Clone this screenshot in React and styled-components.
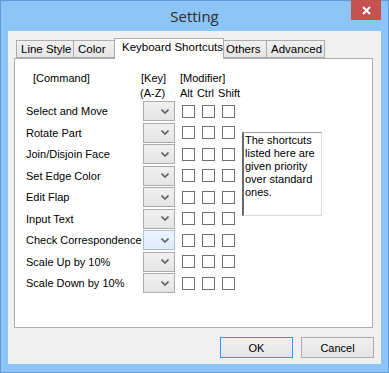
import styled, { createGlobalStyle } from 'styled-components';

const GlobalStyle = createGlobalStyle`
  html, body {
    margin: 0;
    padding: 0;
    background: #8bc4f5;
  }
  * {
    box-sizing: border-box;
  }
`;

const Window = styled.div`
  width: 389px;
  height: 373px;
  background: #8cc4f6;
  border: 1px solid #5d9ad6;
  display: flex;
  flex-direction: column;
  font-family: 'Liberation Sans', Arial, sans-serif;
`;

const TitleBar = styled.div`
  height: 30px;
  display: grid;
  grid-template-columns: 1fr auto 1fr;
  align-items: start;
`;

const Title = styled.div`
  grid-column: 2;
  margin-top: 5px;
  font-family: 'Open Sans', 'Liberation Sans', sans-serif;
  font-size: 15px;
  color: #2d2d2d;
`;

const CloseButton = styled.div`
  grid-column: 3;
  justify-self: end;
  margin-right: 7px;
  margin-top: -1px;
  width: 30px;
  height: 20px;
  background: #c75050;
  display: flex;
  align-items: center;
  justify-content: center;
`;

const Client = styled.div`
  flex: 1;
  margin: 0 7px 8px 7px;
  background: #f0f0f0;
  display: flex;
  flex-direction: column;
`;

const TabStrip = styled.div`
  display: flex;
  align-items: flex-end;
  padding-left: 8px;
  margin-top: 7px;
  height: 20px;
  position: relative;
  z-index: 1;
`;

const Tab = styled.div`
  width: ${(p) => p.$w}px;
  height: ${(p) => (p.$active ? 21 : 18)}px;
  margin-left: ${(p) => (p.$active ? -2 : p.$first ? 0 : -1)}px;
  margin-right: ${(p) => (p.$active ? -2 : 0)}px;
  margin-bottom: ${(p) => (p.$active ? -1 : 0)}px;
  position: relative;
  z-index: ${(p) => (p.$active ? 2 : 1)};
  border: 1px solid #acacac;
  border-bottom: ${(p) => (p.$active ? 'none' : '1px solid #acacac')};
  background: ${(p) =>
    p.$active ? '#ffffff' : 'linear-gradient(#f0f0f0, #e5e5e5)'};
  font-family: 'Liberation Sans', Arial, sans-serif;
  font-size: 11.5px;
  color: #000;
  padding-left: ${(p) => (p.$active ? 7 : 4)}px;
  line-height: ${(p) => (p.$active ? 17 : 16)}px;
  white-space: nowrap;
`;

const Panel = styled.div`
  margin: 0 8px 0 6px;
  height: 270px;
  background: #fff;
  border: 1px solid #acacac;
  padding: 12px 0 0 11px;
  font-size: 11px;
  color: #000;
`;

const Columns = styled.div`
  display: grid;
  grid-template-columns: 110px 32px 13px 13px 13px 80px;
  column-gap: 7px;
`;

const Header = styled(Columns)`
  grid-auto-rows: 15px;
  line-height: 15px;
`;

const HeadCell = styled.div`
  grid-column: ${(p) => p.$col};
  margin-left: ${(p) => p.$shift || 0}px;
  white-space: nowrap;
  word-spacing: 1px;
`;

const Rows = styled(Columns)`
  grid-auto-rows: 20px;
  row-gap: 1.5px;
  align-items: center;
`;

const Label = styled.div`
  grid-column: 1;
  white-space: nowrap;
`;

const Combo = styled.div`
  grid-column: 2;
  height: 20px;
  border: 1px solid ${(p) => (p.$hot ? '#a9bfd6' : '#acacac')};
  background: ${(p) =>
    p.$hot ? 'linear-gradient(#ecf4fc, #dcecfc)' : 'linear-gradient(#f0f0f0, #e5e5e5)'};
  display: flex;
  align-items: center;
  justify-content: flex-end;
  padding-right: 5px;
`;

const Check = styled.div`
  width: 13px;
  height: 13px;
  border: 1px solid #707070;
  background: #fff;
`;

const Note = styled.div`
  grid-column: 6;
  grid-row: 2 / 7;
  align-self: start;
  margin-top: 9px;
  width: 80px;
  height: 84px;
  border-top: 1px solid #a0a0a0;
  border-left: 2px solid #6a6a6a;
  border-right: 1px solid #dadada;
  border-bottom: 1px solid #dadada;
  padding: 1px 0 0 1px;
  font-size: 11px;
  line-height: 13px;
  color: #000;
`;

const ButtonRow = styled.div`
  display: flex;
  justify-content: flex-end;
  gap: 8px;
  margin-top: 9px;
  padding-right: 7px;
`;

const Button = styled.button`
  width: 73px;
  height: 21px;
  border: 1px solid ${(p) => (p.$primary ? '#3399ff' : '#acacac')};
  background: linear-gradient(#f0f0f0, #e5e5e5);
  font-family: 'Liberation Sans', Arial, sans-serif;
  font-size: 11px;
  color: #000;
  padding: 0;
`;

const tabs = [
  { label: 'Line Style', w: 58 },
  { label: 'Color', w: 43 },
  { label: 'Keyboard Shortcuts', w: 110, active: true },
  { label: 'Others', w: 46 },
  { label: 'Advanced', w: 59 },
];

const commands = [
  'Select and Move',
  'Rotate Part',
  'Join/Disjoin Face',
  'Set Edge Color',
  'Edit Flap',
  'Input Text',
  'Check Correspondence',
  'Scale Up by 10%',
  'Scale Down by 10%',
];

function Chevron() {
  return (
    <svg width="8" height="5" viewBox="0 0 8 5">
      <polyline points="0.5,0.5 4,4 7.5,0.5" fill="none" stroke="#606060" strokeWidth="1.6" />
    </svg>
  );
}

export default function App() {
  return (
    <>
      <GlobalStyle />
      <Window>
        <TitleBar>
          <Title>Setting</Title>
          <CloseButton>
            <svg width="9" height="9" viewBox="0 0 9 9">
              <path d="M1 1L8 8M8 1L1 8" stroke="#fff" strokeWidth="2" />
            </svg>
          </CloseButton>
        </TitleBar>
        <Client>
          <TabStrip>
            {tabs.map((t, i) => (
              <Tab key={t.label} $w={t.w} $active={t.active} $first={i === 0}>
                {t.label}
              </Tab>
            ))}
          </TabStrip>
          <Panel>
            <Header>
              <HeadCell $col={1} $shift={7}>[Command]</HeadCell>
              <HeadCell $col={2} $shift={-2}>[Key]</HeadCell>
              <HeadCell $col="3 / 7" $shift={-2}>[Modifier]</HeadCell>
              <HeadCell $col={2} $shift={-3}>(A-Z)</HeadCell>
              <HeadCell $col="3 / 7" $shift={-2}>Alt Ctrl Shift</HeadCell>
            </Header>
            <Rows>
              {commands.map((c, i) => (
                <Row key={c} label={c} row={i + 1} hot={c === 'Check Correspondence'} />
              ))}
              <Note>
                The shortcuts listed here are given priority over standard ones.
              </Note>
            </Rows>
          </Panel>
          <ButtonRow>
            <Button $primary>OK</Button>
            <Button>Cancel</Button>
          </ButtonRow>
        </Client>
      </Window>
    </>
  );
}

function Row({ label, row, hot }) {
  return (
    <>
      <Label style={{ gridRow: row }}>{label}</Label>
      <Combo $hot={hot} style={{ gridRow: row }}>
        <Chevron />
      </Combo>
      <Check style={{ gridRow: row, gridColumn: 3 }} />
      <Check style={{ gridRow: row, gridColumn: 4 }} />
      <Check style={{ gridRow: row, gridColumn: 5 }} />
    </>
  );
}
